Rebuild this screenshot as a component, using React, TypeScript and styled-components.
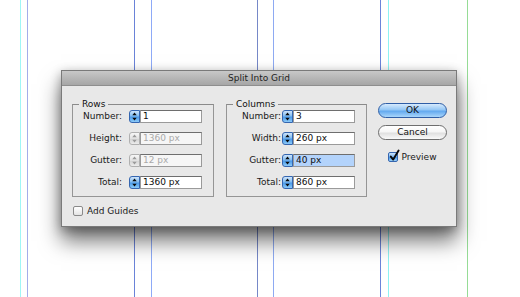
import React from "react";
import styled, { createGlobalStyle, css } from "styled-components";

const Global = createGlobalStyle`
  html, body { margin: 0; padding: 0; background: #fff; }
  body {
    width: 520px; height: 297px; overflow: hidden;
    font-family: "DejaVu Sans", "Liberation Sans", sans-serif;
  }
`;

const Canvas = styled.div`
  position: relative;
  width: 520px;
  height: 297px;
  box-sizing: border-box;
  padding: 70px 0 0 61px;
  background: #fff;
`;

const Guide = styled.div<{ $x: number; $color: string }>`
  position: absolute;
  top: 0;
  bottom: 0;
  left: ${(p) => p.$x}px;
  width: 1px;
  background: ${(p) => p.$color};
`;

const Dialog = styled.div`
  position: relative;
  z-index: 1;
  width: 396px;
  box-sizing: border-box;
  border: 1px solid #7a7a7a;
  background: #e8e8e8;
  box-shadow: 0 14px 20px rgba(0, 0, 0, 0.55), 0 3px 10px rgba(0, 0, 0, 0.3);
  display: flex;
  flex-direction: column;
`;

const TitleBar = styled.div`
  height: 14px;
  line-height: 14px;
  text-align: center;
  font-size: 9px;
  color: #1e1e1e;
  background: linear-gradient(#c8c8c8, #a6a6a6);
  border-bottom: 1px solid #8e8e8e;
`;

const Body = styled.div`
  display: flex;
  padding: 12px 9px 9px 10px;
`;

const Main = styled.div`
  display: flex;
  flex-direction: column;
`;

const Groups = styled.div`
  display: flex;
  gap: 12px;
`;

const Group = styled.fieldset<{ $width: number }>`
  width: ${(p) => p.$width}px;
  box-sizing: border-box;
  margin: 0;
  padding: 0 11px 7px 0;
  border: 1px solid #959595;
  border-top-color: #8a8a8a;
  min-width: 0;
`;

const Legend = styled.legend`
  margin-left: 6px;
  padding: 0 3px;
  font-size: 9px;
  line-height: 12px;
  color: #111;
`;

const FieldGrid = styled.div<{ $labelW: number; $gap: number }>`
  display: grid;
  grid-template-columns: ${(p) => p.$labelW}px ${(p) => p.$gap}px 11px 62px;
  grid-auto-rows: 13px;
  row-gap: 9px;
  align-items: center;
`;

const Label = styled.span`
  grid-column: 1;
  text-align: right;
  font-size: 9px;
  line-height: 13px;
  color: #1a1a1a;
  white-space: nowrap;
`;

const SpinnerBox = styled.span<{ $disabled?: boolean }>`
  grid-column: 3;
  height: 13px;
  box-sizing: border-box;
  border-radius: 3px 0 0 3px;
  display: flex;
  align-items: center;
  justify-content: center;
  ${(p) =>
    p.$disabled
      ? css`
          border: 1px solid #b0b0b0;
          background: linear-gradient(#f7f7f7, #e2e2e2 50%, #d4d4d4 55%, #ececec);
        `
      : css`
          border: 1px solid #3566b0;
          background: linear-gradient(#cfe5fb, #82bdf2 45%, #4b9ae9 55%, #8ccaf8);
        `}
`;

const Field = styled.span<{ $disabled?: boolean; $selected?: boolean }>`
  grid-column: 4;
  height: 13px;
  box-sizing: border-box;
  border: 1px solid #9a9a9a;
  border-top-color: #6e6e6e;
  padding-left: 2px;
  font-size: 9px;
  line-height: 11px;
  white-space: nowrap;
  overflow: hidden;
  background: ${(p) => (p.$selected ? "#b3d3fb" : p.$disabled ? "#f6f6f6" : "#fff")};
  color: ${(p) => (p.$disabled ? "#a9a9a9" : "#0d0d0d")};
`;

const CheckRow = styled.label`
  display: flex;
  align-items: center;
  gap: 4px;
  font-size: 9px;
  line-height: 12px;
  color: #1a1a1a;
`;

const GuidesRow = styled(CheckRow)`
  margin-top: 8px;
  padding-left: 1px;
`;

const Box = styled.span<{ $checked?: boolean }>`
  position: relative;
  width: 10px;
  height: 10px;
  box-sizing: border-box;
  border-radius: 2px;
  ${(p) =>
    p.$checked
      ? css`
          border: 1px solid #3566b0;
          background: linear-gradient(#cfe5fb, #7fb9f1 45%, #4b9ae9 55%, #9ad0f9);
        `
      : css`
          border: 1px solid #8a8a8a;
          background: linear-gradient(#ffffff, #f2f2f2 50%, #e4e4e4);
        `}
`;

const CheckMark = styled.svg`
  position: absolute;
  left: 0px;
  top: -3px;
  width: 11px;
  height: 12px;
  overflow: visible;
`;

const Buttons = styled.div`
  margin-left: 11px;
  margin-top: 5px;
  width: 69px;
  display: flex;
  flex-direction: column;
  align-items: center;
`;

const PushButton = styled.button<{ $primary?: boolean }>`
  width: 69px;
  height: 15px;
  padding: 0;
  border-radius: 8px;
  font-family: inherit;
  font-size: 9px;
  line-height: 13px;
  color: #111;
  box-sizing: border-box;
  ${(p) =>
    p.$primary
      ? css`
          border: 1px solid #2f5ea6;
          background: linear-gradient(#d6eafd, #94c7f5 45%, #63a9ef 55%, #a9d6fb);
        `
      : css`
          border: 1px solid #6e6e6e;
          background: linear-gradient(#ffffff, #f6f6f6 45%, #e0e0e0 55%, #fafafa);
        `}
  & + & {
    margin-top: 7px;
  }
`;

const PreviewRow = styled(CheckRow)`
  margin-top: 11px;
  gap: 3px;
`;

const Arrows = ({ disabled }: { disabled?: boolean }) => (
  <svg width="5" height="9" viewBox="0 0 5 9">
    <path d="M2.5 0.5 L4.7 3.3 H0.3 Z M2.5 8.5 L4.7 5.7 H0.3 Z" fill={disabled ? "#9a9a9a" : "#0a0a0a"} />
  </svg>
);

type Row = { label: string; value: string; disabled?: boolean; selected?: boolean };

const rows: Row[] = [
  { label: "Number:", value: "1" },
  { label: "Height:", value: "1360 px", disabled: true },
  { label: "Gutter:", value: "12 px", disabled: true },
  { label: "Total:", value: "1360 px" },
];

const cols: Row[] = [
  { label: "Number:", value: "3" },
  { label: "Width:", value: "260 px" },
  { label: "Gutter:", value: "40 px", selected: true },
  { label: "Total:", value: "860 px" },
];

const FieldGroup = ({
  title,
  width,
  labelW,
  gap,
  items,
}: {
  title: string;
  width: number;
  labelW: number;
  gap: number;
  items: Row[];
}) => (
  <Group $width={width}>
    <Legend>{title}</Legend>
    <FieldGrid $labelW={labelW} $gap={gap}>
      {items.map((r) => (
        <React.Fragment key={r.label}>
          <Label>{r.label}</Label>
          <SpinnerBox $disabled={r.disabled}>
            <Arrows disabled={r.disabled} />
          </SpinnerBox>
          <Field $disabled={r.disabled} $selected={r.selected}>
            {r.value}
          </Field>
        </React.Fragment>
      ))}
    </FieldGrid>
  </Group>
);

const guides: { x: number; color: string }[] = [
  { x: 20, color: "#9ff6f6" },
  { x: 27, color: "#a4acea" },
  { x: 134, color: "#6a83d8" },
  { x: 151, color: "#8eaaf7" },
  { x: 257, color: "#7688c8" },
  { x: 273, color: "#8eaaf2" },
  { x: 380, color: "#6a84da" },
  { x: 388, color: "#8ff2f2" },
  { x: 467, color: "#96dc96" },
];

export default function App() {
  return (
    <>
      <Global />
      <Canvas>
        {guides.map((g) => (
          <Guide key={g.x} $x={g.x} $color={g.color} />
        ))}
        <Dialog>
          <TitleBar>Split Into Grid</TitleBar>
          <Body>
            <Main>
              <Groups>
                <FieldGroup title="Rows" width={142} labelW={49} gap={7} items={rows} />
                <FieldGroup title="Columns" width={141} labelW={54} gap={1} items={cols} />
              </Groups>
              <GuidesRow>
                <Box />
                Add Guides
              </GuidesRow>
            </Main>
            <Buttons>
              <PushButton $primary>OK</PushButton>
              <PushButton>Cancel</PushButton>
              <PreviewRow>
                <Box $checked>
                  <CheckMark viewBox="0 0 11 12">
                    <path d="M1.8 6.6 L4.2 9.6 L9.6 0.6" fill="none" stroke="#0a0a0a" strokeWidth="1.9" strokeLinecap="round" strokeLinejoin="round" />
                  </CheckMark>
                </Box>
                Preview
              </PreviewRow>
            </Buttons>
          </Body>
        </Dialog>
      </Canvas>
    </>
  );
}
